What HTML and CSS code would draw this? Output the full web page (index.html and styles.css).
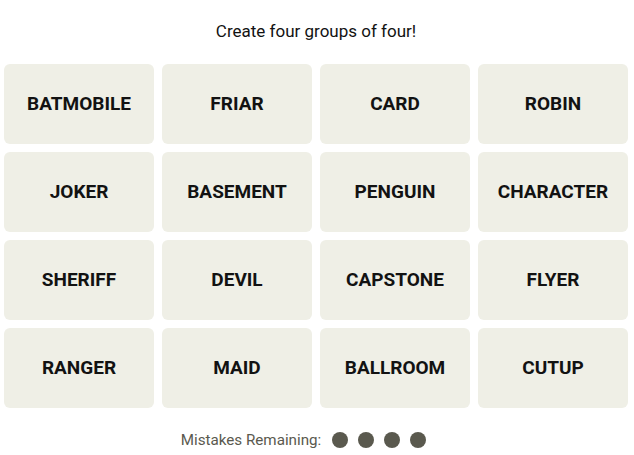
FILE: index.html
```html
<!DOCTYPE html>
<html>
<head>
<meta charset="utf-8">
<link rel="stylesheet" href="styles.css">
</head>
<body>
<div class="game">
  <p class="title">Create four groups of four!</p>
  <div class="grid">
    <div class="tile">BATMOBILE</div>
    <div class="tile">FRIAR</div>
    <div class="tile">CARD</div>
    <div class="tile">ROBIN</div>
    <div class="tile">JOKER</div>
    <div class="tile">BASEMENT</div>
    <div class="tile">PENGUIN</div>
    <div class="tile">CHARACTER</div>
    <div class="tile">SHERIFF</div>
    <div class="tile">DEVIL</div>
    <div class="tile">CAPSTONE</div>
    <div class="tile">FLYER</div>
    <div class="tile">RANGER</div>
    <div class="tile">MAID</div>
    <div class="tile">BALLROOM</div>
    <div class="tile">CUTUP</div>
  </div>
  <div class="mistakes">
    <span class="label">Mistakes Remaining:</span>
    <span class="dots"><span class="dot"></span><span class="dot"></span><span class="dot"></span><span class="dot"></span></span>
  </div>
</div>
</body>
</html>
```
FILE: styles.css
```css
html, body {
  margin: 0;
  padding: 0;
  background: #ffffff;
}
body {
  font-family: Roboto, "Liberation Sans", Arial, sans-serif;
  color: #121212;
}
.game {
  width: 624px;
  padding: 0 6px 0 4px;
  display: flex;
  flex-direction: column;
  align-items: center;
}
.title {
  margin: 0;
  padding-top: 20px;
  height: 64px;
  box-sizing: border-box;
  font-size: 17px;
  line-height: 22px;
  text-align: center;
}
.grid {
  display: grid;
  grid-template-columns: repeat(4, 150px);
  grid-auto-rows: 80px;
  gap: 8px;
}
.tile {
  background: #efefe6;
  border-radius: 6px;
  display: flex;
  align-items: center;
  justify-content: center;
  padding-bottom: 2px;
  box-sizing: border-box;
  font-weight: 700;
  font-size: 19px;
  color: #121212;
}
.mistakes {
  display: flex;
  align-items: center;
  margin-top: 22px;
  height: 20px;
  padding-right: 25px;
  font-size: 15.2px;
  color: #5a594e;
}
.label {
  margin-right: 11px;
}
.dots {
  display: flex;
  gap: 10px;
}
.dot {
  width: 16px;
  height: 16px;
  border-radius: 50%;
  background: #5a594e;
}
```
